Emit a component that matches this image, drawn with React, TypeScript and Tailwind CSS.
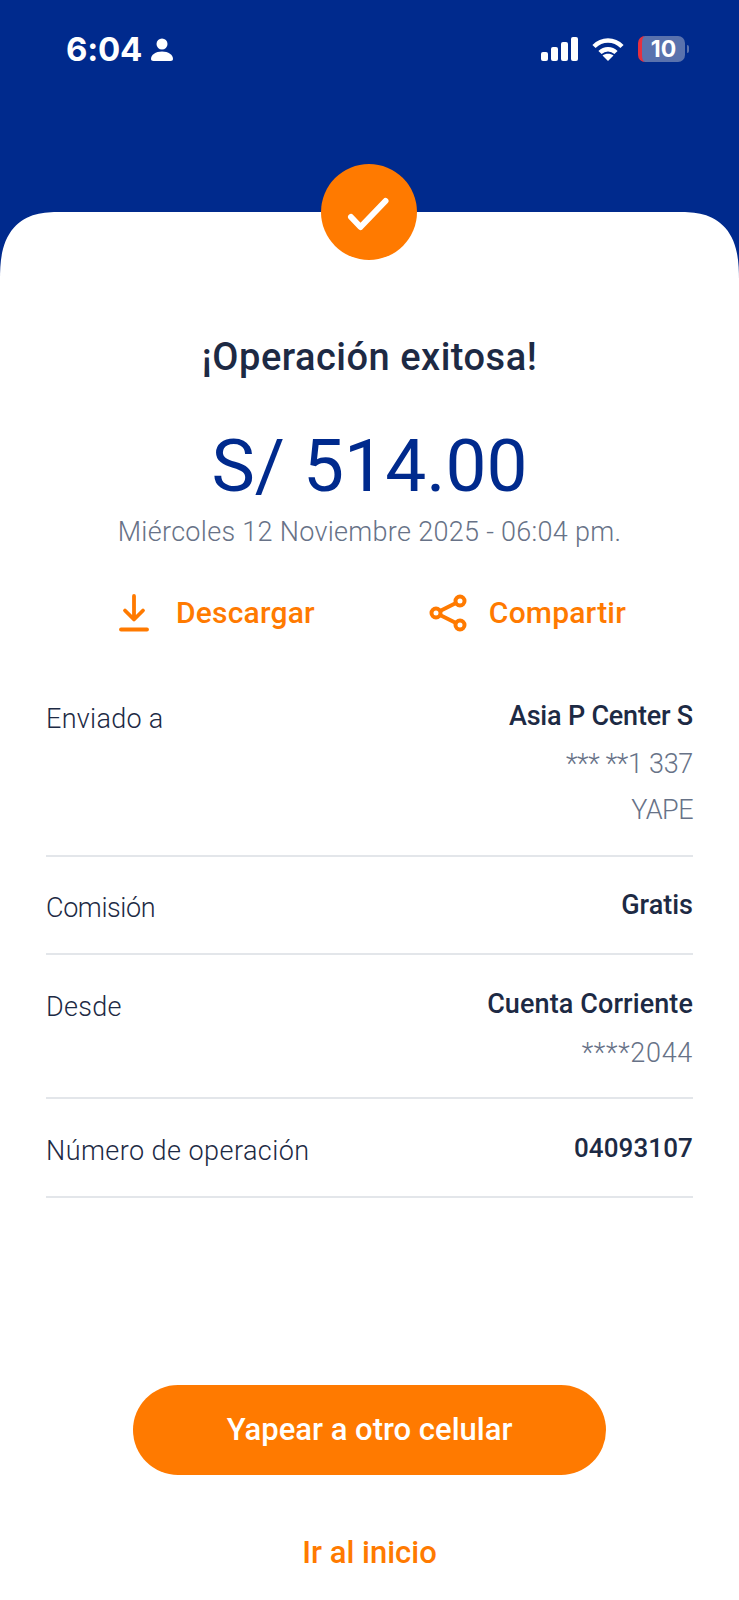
export default function App() {
  const labelCls = "-mb-[3px] pt-[3px] text-[27px] font-light leading-[38px] text-[#1d2a44]";
  const tallLabelCls = "pt-[6px] text-[27px] font-light leading-[38px] tracking-[0.3px] text-[#1d2a44]";
  return (
    <div className="relative flex h-[1600px] w-[739px] flex-col overflow-hidden bg-[#002a8d] [font-family:Roboto,'Liberation_Sans',sans-serif]">
      <div className="flex h-[212px] shrink-0 items-start justify-between pl-[66px] pr-[50px] pt-[29px] text-white">
        <div className="flex items-center gap-[9px]">
          <span className="text-[33px] font-bold leading-[40px] tracking-[-0.2px] [font-family:Inter,sans-serif]">6:04</span>
          <svg width="22" height="23" viewBox="0 0 22 23" fill="white">
            <circle cx="11" cy="6" r="5.500" />
            <path d="M2.500 23C.800 23 0 22.200 0 20.800 0 17 4.500 13.500 11 13.500S22 17 22 20.800C22 22.200 21.200 23 19.500 23z" />
          </svg>
        </div>
        <div className="flex items-center gap-[14px] pt-[7px]">
          <svg width="37" height="24" viewBox="0 0 37 24" fill="white">
            <rect x="0" y="15" width="7" height="9" rx="2" />
            <rect x="10" y="10" width="7" height="14" rx="2" />
            <rect x="20" y="5" width="7" height="19" rx="2" />
            <rect x="30" y="0" width="7" height="24" rx="2" />
          </svg>
          <svg width="32" height="24" viewBox="0 0 32 24" fill="none" stroke="white" strokeWidth="4.500">
            <path d="M2 9.500C10 1.500 22 1.500 30 9.500" />
            <path d="M8 15.500C12.500 11 19.500 11 24 15.500" />
            <path d="M16 24l-5.500-5.500c3-2.500 8-2.500 11 0z" fill="white" stroke="none" />
          </svg>
          <div className="flex items-center gap-[2px]">
            <div className="flex h-[26px] w-[47px] items-center justify-center rounded-[7px] border-l-[4px] border-[#e5303f] bg-[#5a72ad]">
              <span className="text-[23px] font-bold leading-[26px] [font-family:Inter,sans-serif]">10</span>
            </div>
            <div className="h-[8px] w-[2px] rounded-r-full bg-[#5a72ad]" />
          </div>
        </div>
      </div>

      <div className="absolute left-[321px] top-[164px] flex h-[96px] w-[96px] items-center justify-center rounded-full bg-[#ff7a00]">
        <svg width="44" height="44" viewBox="0 0 44 44" fill="none" stroke="white" strokeWidth="6" strokeLinecap="round" strokeLinejoin="round">
          <path d="M4 27l9.500 10L38.500 11" />
        </svg>
      </div>

      <main className="flex flex-1 flex-col rounded-tl-[60px_68px] rounded-tr-[60px_68px] bg-white px-[46px] pt-[120px] [corner-shape:superellipse(1.4)]">
        <h1 className="text-center text-[38px] font-medium leading-[50px] tracking-[0.5px] text-[#1d2a44]">¡Operación exitosa!</h1>
        <div className="mt-[39px] text-center text-[73px] font-normal leading-[90px] text-[#002a8d]">S/ 514.00</div>
        <div className="mt-[3px] text-center text-[27px] font-light leading-[36px] tracking-[0.3px] text-[#677287]">Miércoles 12 Noviembre 2025 - 06:04 pm.</div>

        <div className="mt-[43px] flex h-[40px] items-center justify-between pl-[73px] pr-[67px]">
          <div className="flex items-center gap-[27px]">
            <svg width="30" height="38" viewBox="0 0 30 38" fill="none" stroke="#ff7a00" strokeWidth="3.800" strokeLinecap="round" strokeLinejoin="round">
              <path d="M15 2v23M6 16.500l9 9 9-9" />
              <path d="M2 35.500h26" />
            </svg>
            <span className="text-[30px] font-medium leading-[40px] tracking-[0.2px] text-[#ff7a00]">Descargar</span>
          </div>
          <div className="flex items-center gap-[22px]">
            <svg width="38" height="38" viewBox="0 0 38 38" fill="none" stroke="#ff7a00" strokeWidth="4">
              <circle cx="7" cy="19" r="4.500" />
              <circle cx="31" cy="7" r="4.500" />
              <circle cx="31" cy="31" r="4.500" />
              <path d="M11 17L27 9M11 21L27 29" />
            </svg>
            <span className="text-[30px] font-medium leading-[40px] tracking-[0.2px] text-[#ff7a00]">Compartir</span>
          </div>
        </div>

        <div className="mt-[61px] flex flex-col">
          <div className="flex justify-between border-b-2 border-[#e3e6ea] pb-[22px]">
            <span className={tallLabelCls}>Enviado a</span>
            <div className="flex flex-col items-end text-[27px] leading-[45px]">
              <span className="mb-[3px] font-medium tracking-[-0.2px] text-[#1d2a44]">Asia P Center S</span>
              <span className="mb-[1px] font-light tracking-[-0.3px] text-[#677287]">*** **1 337</span>
              <span className="font-light tracking-[-0.5px] text-[#677287]">YAPE</span>
            </div>
          </div>
          <div className="flex justify-between border-b-2 border-[#e3e6ea] pb-[29px] pt-[29px]">
            <span className={`${labelCls} tracking-[-0.4px]`}>Comisión</span>
            <span className="text-[27px] font-medium leading-[38px] text-[#1d2a44]">Gratis</span>
          </div>
          <div className="flex justify-between border-b-2 border-[#e3e6ea] pb-[21px] pt-[27px]">
            <span className={tallLabelCls}>Desde</span>
            <div className="flex flex-col items-end text-[27px] leading-[45px]">
              <span className="mb-[4px] font-medium tracking-[0.1px] text-[#1d2a44]">Cuenta Corriente</span>
              <span className="font-light tracking-[0.7px] text-[#677287]">****2044</span>
            </div>
          </div>
          <div className="flex justify-between border-b-2 border-[#e3e6ea] pb-[29px] pt-[30px]">
            <span className={`${labelCls} tracking-[0.45px]`}>Número de operación</span>
            <span className="text-[26px] font-medium leading-[38px] tracking-[0.1px] text-[#1d2a44]">04093107</span>
          </div>
        </div>

        <button className="mx-auto mt-[187px] flex h-[90px] w-[473px] items-center justify-center rounded-[45px] bg-[#ff7a00] text-[31px] font-medium text-white">
          Yapear a otro celular
        </button>
        <div className="mt-[58px] text-center text-[31px] font-medium leading-[40px] text-[#ff7a00]">Ir al inicio</div>
      </main>
    </div>
  );
}
